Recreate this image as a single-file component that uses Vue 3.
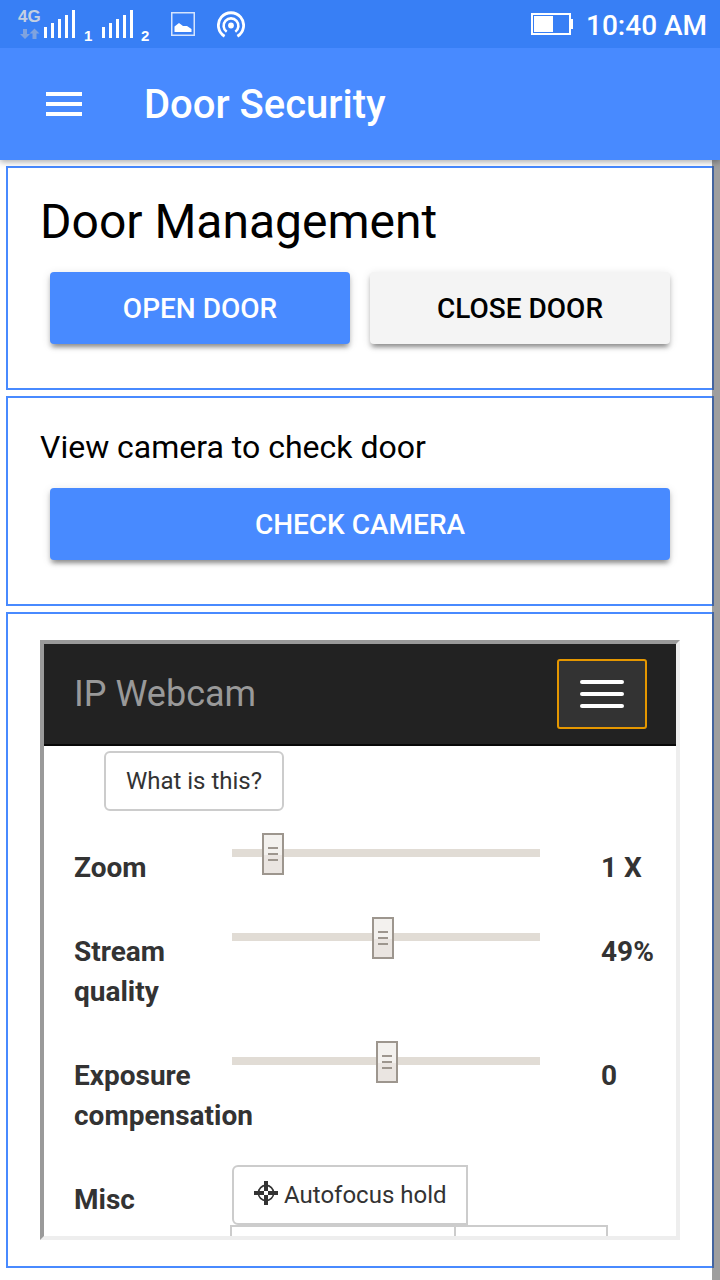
<script setup>
const signal = [11, 15, 19, 23, 28]
const sliders = [
  { label: 'Zoom', value: '1 X', offset: 30 },
  { label: 'Stream quality', value: '49%', offset: 140 },
  { label: 'Exposure compensation', value: '0', offset: 144 }
]
</script>

<template>
  <div class="screen">
    <div class="status">
      <div class="network">
        <span class="net-label">4G</span>
        <svg width="22" height="14" viewBox="0 0 22 14">
          <path d="M4 1h4v5h3l-5 5-5-5h3z" />
          <path d="M13.500 11h4V5.500h3l-5-5-5 5h3z" />
        </svg>
      </div>
      <div class="bars">
        <i v-for="h in signal" :key="h" :style="{ height: h + 'px' }"></i>
      </div>
      <span class="sim">1</span>
      <div class="bars second">
        <i v-for="h in signal" :key="h" :style="{ height: h + 'px' }"></i>
      </div>
      <span class="sim two">2</span>
      <svg class="picture" width="24" height="24" viewBox="0 0 24 24">
        <rect x="0.75" y="0.75" width="22.5" height="22.5" fill="none" stroke="#d5e4fd" stroke-width="1.5" />
        <path d="M3.500 20v-5.500l4.500-3.500 4 3h4l4.500 3V20z" fill="#fff" />
      </svg>
      <svg class="cast" width="28" height="28" viewBox="0 0 28 28" fill="none" stroke="#fff">
        <path d="M7.600 25.200a12.600 12.600 0 1 1 12.800 0" stroke-width="2.800" />
        <path d="M9.700 20.800a7.400 7.400 0 1 1 8.600 0" stroke-width="2.600" />
        <circle cx="14" cy="14.500" r="2.900" fill="#fff" stroke="none" />
      </svg>
      <svg class="battery" width="42" height="22" viewBox="0 0 42 22">
        <rect x="1" y="1" width="38" height="20" fill="none" stroke="#fff" stroke-width="2" />
        <rect x="3" y="3" width="19" height="16" fill="#fff" />
        <rect x="40" y="6" width="2" height="10" fill="#fff" />
      </svg>
      <span class="time">10:40 AM</span>
    </div>

    <header class="toolbar">
      <div class="menu"><i></i><i></i><i></i></div>
      <span class="title">Door Security</span>
    </header>

    <main class="content">
      <section class="card manage">
        <h1>Door Management</h1>
        <div class="buttons">
          <button class="btn primary">OPEN DOOR</button>
          <button class="btn light">CLOSE DOOR</button>
        </div>
      </section>

      <section class="card camera">
        <p>View camera to check door</p>
        <div class="buttons">
          <button class="btn primary">CHECK CAMERA</button>
        </div>
      </section>

      <section class="card feed">
        <div class="frame">
          <nav class="navbar">
            <span>IP Webcam</span>
            <div class="toggle"><i></i><i></i><i></i></div>
          </nav>
          <div class="panel">
            <button class="outline what">What is this?</button>
            <div v-for="s in sliders" :key="s.label" class="row">
              <label>{{ s.label }}</label>
              <div class="slider">
                <div class="track"></div>
                <div class="thumb" :style="{ left: s.offset + 'px' }"><i></i><i></i><i></i></div>
              </div>
              <span class="value">{{ s.value }}</span>
            </div>
            <div class="row">
              <label>Misc</label>
              <div class="misc">
                <button class="outline focus">
                  <svg width="24" height="24" viewBox="0 0 24 24">
                    <circle cx="12" cy="12" r="7.600" fill="none" stroke="#333" stroke-width="1.600" />
                    <path d="M10 0h4v10h-4zM10 14h4v10h-4zM0 10h10v4H0zM14 10h10v4H14z" fill="#333" />
                  </svg>
                  <span>Autofocus hold</span>
                </button>
                <div class="group"><div></div></div>
              </div>
            </div>
          </div>
        </div>
      </section>
      <div class="scrollbar"></div>
    </main>
  </div>
</template>

<style>
body { margin: 0; background: #fff; }
</style>

<style scoped>
* { box-sizing: border-box; }
.screen {
  width: 720px;
  height: 1280px;
  overflow: hidden;
  display: flex;
  flex-direction: column;
  font-family: Roboto, "Liberation Sans", sans-serif;
  background: #fff;
  color: #000;
}
button { font-family: inherit; margin: 0; padding: 0; border: 0; }
i { display: block; }
.status {
  position: relative;
  z-index: 3;
  height: 48px;
  flex: none;
  display: flex;
  align-items: flex-start;
  background: #387ff5;
  color: #fff;
}
.network { width: 25px; margin: 9px 0 0 18px; color: #c3cfe2; }
.net-label { display: block; height: 18px; font-family: "Liberation Sans", sans-serif; font-size: 17px; line-height: 16px; font-weight: 700; }
.network svg { display: block; margin: 1px 0 0 1px; fill: #7fa3df; }
.bars { display: flex; align-items: flex-end; gap: 4px; height: 28px; margin: 10px 0 0 1px; }
.bars i { width: 3px; background: #fff; }
.sim { width: 12px; margin: 26px 0 0 9px; font-family: "Liberation Sans", sans-serif; font-size: 15px; line-height: 19px; font-weight: 700; }
.bars.second { margin-left: 6px; }
.sim.two { margin-left: 8px; }
.picture { margin: 12px 0 0 18px; }
.cast { margin: 11px 0 0 22px; }
.battery { margin: 13px 0 0 auto; }
.time { width: 121px; margin: 0 13px 0 13px; font-size: 28px; line-height: 51px; font-weight: 500; white-space: nowrap; }
.toolbar {
  height: 112px;
  flex: none;
  display: flex;
  align-items: center;
  padding-left: 46px;
  position: relative;
  z-index: 2;
  background: #488aff;
  color: #fff;
  box-shadow: 0 2px 6px rgba(0, 0, 0, .32);
}
.menu { display: flex; flex-direction: column; gap: 6px; width: 36px; }
.menu i { height: 4px; background: #fff; }
.title { margin: 2px 0 0 62px; font-size: 40px; line-height: 48px; font-weight: 500; }
.content { position: relative; flex: 1; display: flex; flex-direction: column; gap: 6px; padding: 6px; }
.card { flex: none; border: 2px solid #488aff; padding: 0 32px; }
.manage { height: 224px; }
.camera { height: 210px; }
.feed { height: 656px; padding-top: 26px; }
h1 { margin: 26px 0 22px; font-size: 48px; line-height: 56px; font-weight: 400; }
p { margin: 29px 0 21px; font-size: 32px; line-height: 40px; }
.buttons { display: flex; gap: 20px; padding: 0 10px; }
.btn {
  flex: 1;
  height: 72px;
  border-radius: 4px;
  font-size: 28px;
  font-weight: 500;
  box-shadow: 0 4px 4px rgba(0, 0, 0, .2), 0 6px 4px -4px rgba(0, 0, 0, .24), 0 2px 10px rgba(0, 0, 0, .12);
}
.primary { background: #488aff; color: #fff; }
.light { background: #f4f4f4; color: #000; }
.frame {
  width: 640px;
  height: 600px;
  overflow: hidden;
  border: 4px solid;
  border-color: #9a9a9a #eee #eee #9a9a9a;
  color: #333;
}
.navbar {
  height: 102px;
  display: flex;
  justify-content: space-between;
  padding: 15px 29px 0 30px;
  background: #222;
  border-bottom: 2px solid #080808;
  color: #999;
  font-size: 36px;
  line-height: 70px;
}
.toggle {
  width: 90px;
  height: 70px;
  display: flex;
  flex-direction: column;
  gap: 8px;
  padding: 19px 21px;
  border: 2px solid #e59700;
  border-radius: 3px;
  background: #333;
}
.toggle i { height: 4px; border-radius: 2px; background: #fff; }
.panel { padding: 5px 0 0 30px; }
.outline { height: 60px; border: 2px solid #ccc; border-radius: 6px; background: #fff; color: #333; font-size: 24px; }
.what { display: block; width: 180px; margin: 0 0 22px 30px; }
.row { display: grid; grid-template-columns: 158px 369px 1fr; align-items: start; font-size: 28px; line-height: 40px; font-weight: 700; }
label { padding: 15px 0 29px; }
.value { padding-top: 15px; }
.slider { position: relative; width: 308px; padding-top: 16px; }
.track { height: 8px; background: #e1dcd5; }
.thumb {
  position: absolute;
  top: 0;
  width: 22px;
  height: 42px;
  display: flex;
  flex-direction: column;
  gap: 4px;
  padding: 12px 4px;
  border: 2px solid #9d968e;
  background: linear-gradient(#f3f1ee 0 20px, #eae5e1 20px);
}
.thumb i { height: 2px; background: #9d968e; }
.focus { width: 236px; display: flex; align-items: center; padding-left: 20px; border-radius: 6px 0 0 6px; font-weight: 400; white-space: nowrap; }
.focus svg { margin: -4px 6px 0 0; }
.group { display: flex; width: 378px; height: 60px; margin-left: -2px; border: 2px solid #ccc; }
.group div { width: 224px; height: 100%; border-right: 2px solid #ccc; }
.scrollbar { position: absolute; top: 0; right: 0; width: 8px; height: 1120px; background: rgba(64, 64, 64, .51); }
</style>
